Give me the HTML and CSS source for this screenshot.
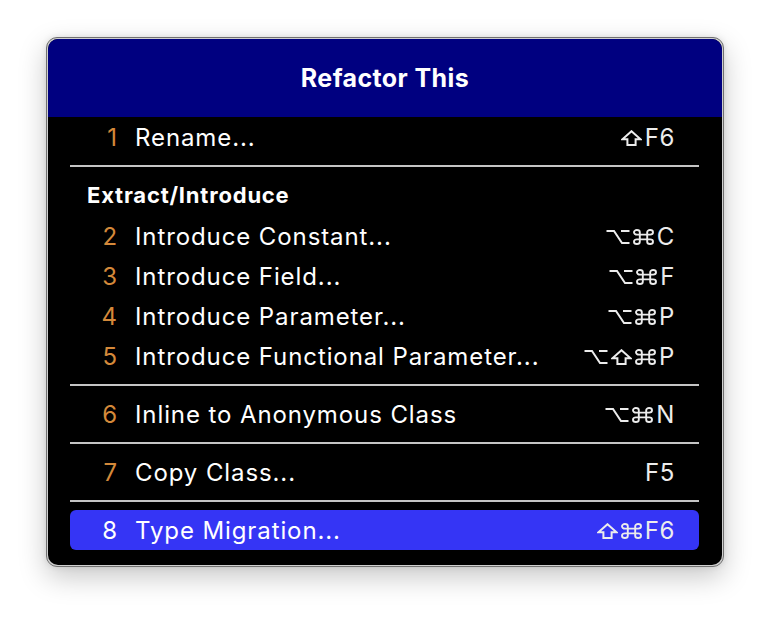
FILE: index.html
```html
<!DOCTYPE html>
<html>
<head>
<meta charset="utf-8">
<link rel="stylesheet" href="styles.css">
</head>
<body>
<svg class="defs" width="0" height="0">
  <defs>
    <symbol id="shift" viewBox="0 0 21 16"><path d="M10.5 1.2 L19.6 9.3 H14.6 V15 H6.4 V9.3 H1.4 Z" fill="none" stroke="currentColor" stroke-width="2" stroke-linejoin="miter"/></symbol>
    <symbol id="cmd" viewBox="0 0 21 16"><path d="M14.2 3.3 V12.7 A2.9 2.3 0 1 0 17.1 10.4 H3.9 A2.9 2.3 0 1 0 6.8 12.7 V3.3 A2.9 2.3 0 1 0 3.9 5.6 H17.1 A2.9 2.3 0 1 0 14.2 3.3 Z" fill="none" stroke="currentColor" stroke-width="1.9"/></symbol>
    <symbol id="opt" viewBox="0 0 24 15"><path d="M0.5 2 H8 L16 14 H23.5 M15 2 H23.5" fill="none" stroke="currentColor" stroke-width="2"/></symbol>
  </defs>
</svg>
<div class="window">
  <div class="inner">
    <div class="header">Refactor This</div>
    <div class="list">
      <div class="row"><span class="num">1</span><span class="label">Rename...</span><span class="key"><svg class="ic ic-shift"><use href="#shift"/></svg><span>F6</span></span></div>
      <div class="sep"></div>
      <div class="group">Extract/Introduce</div>
      <div class="row"><span class="num">2</span><span class="label">Introduce Constant...</span><span class="key"><svg class="ic ic-opt"><use href="#opt"/></svg><svg class="ic ic-cmd"><use href="#cmd"/></svg><span>C</span></span></div>
      <div class="row"><span class="num">3</span><span class="label">Introduce Field...</span><span class="key"><svg class="ic ic-opt"><use href="#opt"/></svg><svg class="ic ic-cmd"><use href="#cmd"/></svg><span>F</span></span></div>
      <div class="row"><span class="num">4</span><span class="label">Introduce Parameter...</span><span class="key"><svg class="ic ic-opt"><use href="#opt"/></svg><svg class="ic ic-cmd"><use href="#cmd"/></svg><span>P</span></span></div>
      <div class="row"><span class="num">5</span><span class="label">Introduce Functional Parameter...</span><span class="key"><svg class="ic ic-opt"><use href="#opt"/></svg><svg class="ic ic-shift"><use href="#shift"/></svg><svg class="ic ic-cmd"><use href="#cmd"/></svg><span>P</span></span></div>
      <div class="sep"></div>
      <div class="row"><span class="num">6</span><span class="label">Inline to Anonymous Class</span><span class="key"><svg class="ic ic-opt"><use href="#opt"/></svg><svg class="ic ic-cmd"><use href="#cmd"/></svg><span>N</span></span></div>
      <div class="sep"></div>
      <div class="row"><span class="num">7</span><span class="label">Copy Class...</span><span class="key"><span>F5</span></span></div>
      <div class="sep"></div>
      <div class="row selected"><span class="num">8</span><span class="label">Type Migration...</span><span class="key"><svg class="ic ic-shift"><use href="#shift"/></svg><svg class="ic ic-cmd"><use href="#cmd"/></svg><span>F6</span></span></div>
    </div>
  </div>
</div>
</body>
</html>
```

FILE: styles.css
```css
html, body {
  margin: 0;
  padding: 0;
  background: #ffffff;
}
body {
  padding: 37px 0 50px 46px;
  font-family: Inter, "Noto Sans", "DejaVu Sans", sans-serif;
}
.defs {
  position: absolute;
  width: 0;
  height: 0;
}
.window {
  width: 674px;
  border: 1px solid #707070;
  border-radius: 11px;
  background: #cfcfcf;
  padding: 1px;
  box-shadow: 0 10px 28px rgba(0,0,0,0.22), 0 0 6px rgba(0,0,0,0.10);
}
.inner {
  background: #000;
  border-radius: 10px;
  overflow: hidden;
  padding-bottom: 15px;
}
.header {
  background: #000080;
  height: 78px;
  color: #fff;
  font-weight: 700;
  font-size: 25px;
  letter-spacing: 0.4px;
  display: flex;
  align-items: center;
  justify-content: center;
}
.list {
  padding: 0 23px 0 22px;
}
.row {
  height: 40px;
  display: flex;
  align-items: center;
  color: #fff;
  font-size: 24px;
  letter-spacing: 0.9px;
  padding: 0 24px 0 18px;
}
.num {
  width: 30px;
  text-align: right;
  color: #d4893a;
  margin-right: 17px;
}
.label {
  flex: 1;
}
.key {
  display: flex;
  align-items: center;
  gap: 3px;
  color: #ececec;
  letter-spacing: 0.6px;
}
.ic {
  display: block;
  height: 16px;
  margin-top: 1px;
}
.ic-shift { width: 21px; }
.ic-cmd { width: 21px; }
.ic-opt { width: 24px; height: 15px; }
.sep {
  height: 2px;
  background: #c4c4c4;
  margin: 8px 0 8px;
}
.group {
  height: 40px;
  display: flex;
  align-items: center;
  color: #fff;
  font-weight: 700;
  font-size: 22px;
  letter-spacing: 0.8px;
  padding-left: 17px;
  margin-bottom: 1px;
}
.selected {
  background: #3535f5;
  border-radius: 6px;
}
.selected .num {
  color: #fff;
}
```
